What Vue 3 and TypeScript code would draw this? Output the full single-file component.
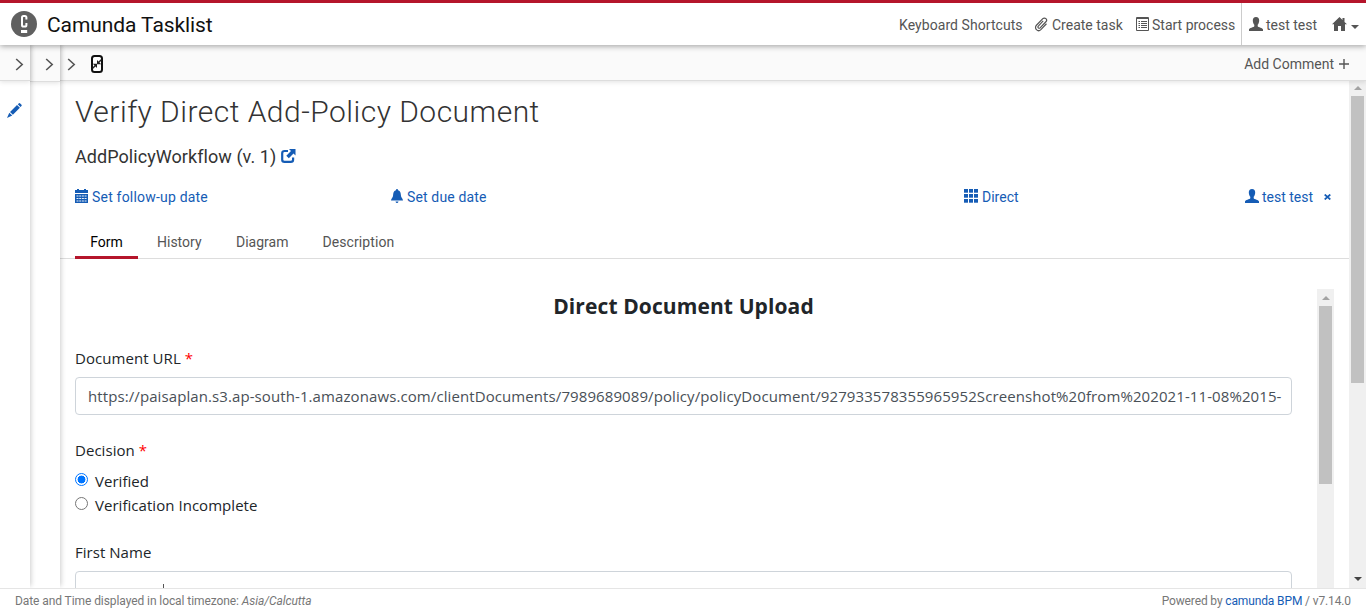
<script setup lang="ts">
import { ref } from 'vue'

const tabs = ['Form', 'History', 'Diagram', 'Description']
const activeTab = ref('Form')
const decision = ref('Verified')
const options = ['Verified', 'Verification Incomplete']
const documentUrl =
  'https://paisaplan.s3.ap-south-1.amazonaws.com/clientDocuments/7989689089/policy/policyDocument/927933578355965952Screenshot%20from%202021-11-08%2015-'
const gridCells = [0, 5, 10]
</script>

<template>
  <div class="app">
    <header class="header">
      <svg class="logo" viewBox="0 0 26 26">
        <circle cx="13" cy="13" r="13" fill="#606060" />
        <path d="M15.400 8.500V6.600Q15.400 5 13.900 5h-1.400Q11 5 11 6.600v7.300q0 1.600 1.500 1.600h1.400q1.500 0 1.500-1.600v-2" fill="none" stroke="#fff" stroke-width="2" />
        <rect x="10" y="19" width="6.200" height="3" fill="#fff" />
      </svg>
      <span class="brand">Camunda Tasklist</span>
      <nav class="nav">
        <span class="shortcuts">Keyboard Shortcuts</span>
        <span class="create">
          <svg class="icon clip" viewBox="0 0 16 16"><path d="M9.800 4.200 4.600 9.700a1.300 1.300 0 0 0 1.900 1.900l6.200-6.500a2.300 2.300 0 0 0-3.300-3.300L2.600 8.800a3.300 3.300 0 0 0 4.700 4.700l6-6.300" fill="none" stroke="#555" stroke-width="1.300" /></svg>
          <span>Create task</span>
        </span>
        <span class="start">
          <svg class="icon list" viewBox="0 0 14 14"><path d="M.5 .5h12v13H.5zM1 1.500h11" fill="none" stroke="#555" /><path d="M2.500 4.500h1.500M5 4.500h6M2.500 6.500h1.500M5 6.500h6M2.500 8.500h1.500M5 8.500h6M2.500 10.500h1.500M5 10.500h6" fill="none" stroke="#555" /></svg>
          <span>Start process</span>
        </span>
        <span class="account">
          <svg class="icon" viewBox="0 0 14 14"><path d="M7 0C4.800 0 3.700 1.600 3.800 3.700 3.900 5.600 4.700 7 5.300 7.800v1.400C4.900 10.300 0 10.700 0 12.500V14h14v-1.500c0-1.800-4.900-2.200-5.300-3.300V7.800C9.300 7 10.100 5.600 10.200 3.700 10.300 1.600 9.200 0 7 0z" fill="#555" /></svg>
          <span>test test</span>
        </span>
        <span class="home">
          <svg class="icon" viewBox="0 0 15 14"><path d="M7.500 0 0 7.300h2V14h4V9h3v5h4V7.300h2L12.500 4.900V1h-2v2z" fill="#555" /></svg>
          <i class="caret"></i>
        </span>
      </nav>
    </header>

    <div class="workspace">
      <aside class="rail first">
        <div class="bar railbar"><svg class="chevron" viewBox="0 0 9 13"><path d="m1.200 1 6 5.500-6 5.500" /></svg></div>
        <svg class="pencil" viewBox="0 0 15 15"><path d="M10.800 1.200 12 .2q.7-.4 1.200.2l1.300 1.300q.5.600 0 1.200l-1.100 1zM10 2l2.900 2.800-7 6.900L3 8.900zM2.300 9.700l2.900 2.900L0 15z" fill="#155cb5" /></svg>
      </aside>
      <aside class="rail second">
        <div class="bar railbar"><svg class="chevron" viewBox="0 0 9 13"><path d="m1.200 1 6 5.500-6 5.500" /></svg></div>
      </aside>

      <main class="task">
        <div class="bar taskbar">
          <svg class="chevron" viewBox="0 0 9 13"><path d="m1.200 1 6 5.500-6 5.500" /></svg>
          <svg class="resize" viewBox="0 0 12 18"><rect x="1" y="1" width="10" height="16" rx="2.500" fill="#fff" stroke="#111" stroke-width="2" /><path d="M6 5v4.200h4.200zM6 13V8.800H1.800z" fill="#222" /><path d="M7 8l3.300-3.300M5 10l-3.300 3.300" stroke="#222" stroke-width="1.400" /></svg>
          <span class="comment">Add Comment</span>
          <svg class="plus" viewBox="0 0 10 10"><path d="M5 0v10M0 5h10" stroke="#555" stroke-width="1.400" /></svg>
        </div>
        <div class="scrollarea">
          <div class="content">
            <h1>Verify Direct Add-Policy Document</h1>
            <div class="process">
              <span>AddPolicyWorkflow (v. 1)</span>
              <svg viewBox="0 0 15 14"><path d="M7 2H3.500Q1.200 2 1.200 4.200v6.500q0 2.200 2.300 2.200h6.300q2.300 0 2.300-2.200V8.500" fill="none" stroke="#155cb5" stroke-width="2.200" /><path d="M8 0h6.500v6.500l-2-2-4.700 4.700-2.500-2.500L10 2z" fill="#155cb5" /></svg>
            </div>
            <div class="meta">
              <span class="follow">
                <svg class="icon cal" viewBox="0 0 13 14"><path d="M0 1h2V0h2v1h5V0h2v1h2v3H0zM0 5h13v9H0z" fill="#155cb5" /><path d="M1.500 7h2M4.200 7h2M6.900 7h2M9.600 7h2M1.500 9.500h2M4.200 9.500h2M6.900 9.500h2M9.600 9.500h2M1.500 12h2M4.200 12h2M6.900 12h2M9.600 12h2" stroke="#fff" stroke-width=".9" /></svg>
                <span>Set follow-up date</span>
              </span>
              <span class="due">
                <svg class="icon bell" viewBox="0 0 12 14"><path d="M6 0q1 0 1.100 1.200C9.500 1.800 9.800 4 9.900 6.200 10 8.800 12 9.500 12 11.500H0C0 9.500 2 8.800 2.100 6.200 2.200 4 2.500 1.800 4.900 1.200Q5 0 6 0zM4.500 12.500h3Q7.200 14 6 14t-1.500-1.500z" fill="#155cb5" /></svg>
                <span>Set due date</span>
              </span>
              <span class="group">
                <svg class="icon" viewBox="0 0 14 14"><template v-for="y in gridCells" :key="y"><rect v-for="x in gridCells" :key="x" :x="x" :y="y" width="4" height="3.700" fill="#155cb5" /></template></svg>
                <span>Direct</span>
              </span>
              <span class="assignee">
                <svg class="icon" viewBox="0 0 14 14"><path d="M7 0C4.800 0 3.700 1.600 3.800 3.700 3.900 5.600 4.700 7 5.300 7.800v1.400C4.900 10.300 0 10.700 0 12.500V14h14v-1.500c0-1.800-4.900-2.200-5.300-3.300V7.800C9.300 7 10.100 5.600 10.200 3.700 10.300 1.600 9.200 0 7 0z" fill="#155cb5" /></svg>
                <span>test test</span>
                <svg class="remove" viewBox="0 0 7 6"><path d="m.7.500 5.600 5M6.300.5.700 5.500" stroke="#155cb5" stroke-width="1.700" /></svg>
              </span>
            </div>
            <div class="tabs">
              <button v-for="tab in tabs" :key="tab" :class="['tab', tab.toLowerCase(), { active: activeTab === tab }]" @click="activeTab = tab"><span>{{ tab }}</span></button>
            </div>
            <div class="formarea">
              <form class="form">
                <h2><span>Direct Document Upload</span></h2>
                <div class="label url-label"><span>Document URL</span> <b>*</b></div>
                <div class="field"><span class="url">{{ documentUrl }}</span></div>
                <div class="label decision-label"><span>Decision</span> <b>*</b></div>
                <label v-for="(option, i) in options" :key="option" :class="['option', 'option' + i]">
                  <i :class="['radio', { checked: decision === option }]" @click="decision = option"></i>
                  <span>{{ option }}</span>
                </label>
                <div class="label name-label"><span>First Name</span></div>
                <div class="field name"><i class="ascender"></i></div>
              </form>
              <div class="scrollbar inner"><i class="up"></i><div class="thumb"></div></div>
            </div>
          </div>
          <div class="scrollbar outer"><i class="up"></i><div class="thumb"></div><i class="down"></i></div>
        </div>
      </main>
    </div>

    <footer class="footer">
      <span class="zone">Date and Time displayed in local timezone: <em>Asia/Calcutta</em></span>
      <span class="powered">Powered by <a>camunda BPM</a> / v7.14.0</span>
    </footer>
  </div>
</template>

<style>
body { margin: 0; overflow: hidden; }
</style>

<style scoped>
* { box-sizing: border-box; }
.app { width: 1366px; height: 612px; display: flex; flex-direction: column; overflow: hidden; background: #fff; color: #555; font: 14px/20px Roboto, sans-serif; white-space: nowrap; }
svg { display: block; flex: none; }
.header { height: 45px; flex: none; display: flex; align-items: center; padding-left: 11px; border-top: 3px solid #b5152b; background: #fff; box-shadow: 0 1px 6px rgba(0,0,0,.38); position: relative; z-index: 5; }
.logo { width: 26px; height: 26px; }
.brand { margin: 1px 0 0 10px; color: #111; font-size: 21px; line-height: 28px; letter-spacing: -.08px; }
.nav { margin-left: auto; height: 42px; display: flex; align-items: stretch; }
.nav > span { display: flex; align-items: center; gap: 3px; padding-top: 2px; }
.nav .shortcuts { width: 135px; letter-spacing: .06px; }
.create { width: 102px; }
.start { width: 105px; }
.nav .start { gap: 2px; }
.account { width: 91px; padding-left: 7px; border-left: 1px solid #ccc; }
.home { width: 34px; }
.nav .home { gap: 4px; }
.icon { width: 14px; height: 14px; margin-top: -2px; }
.clip { width: 15px; height: 15px; }
.home .icon { width: 15px; }
.caret { border: 4px solid transparent; border-top-color: #555; border-bottom: 0; margin-top: 3px; }
.workspace { height: 543px; flex: none; display: flex; }
.rail { width: 30px; flex: none; background: #fff; position: relative; box-shadow: 1px -2px 5px rgba(0,0,0,.2); }
.first { z-index: 3; }
.second { z-index: 2; }
.bar { height: 36px; display: flex; align-items: center; background: #fafafa; border-bottom: 1px solid #ddd; box-shadow: 0 1px 5px rgba(0,0,0,.12); padding-top: 3px; }
.railbar { padding-left: 15px; }
.second .bar { height: 37px; padding-top: 2px; }
.chevron { width: 9px; height: 13px; fill: none; stroke: #555; stroke-width: 1.600; }
.pencil { width: 15px; height: 15px; margin: 22px 0 0 7px; }
.task { width: 1306px; flex: none; display: flex; flex-direction: column; }
.taskbar { padding-left: 7px; padding-right: 17px; flex: none; position: relative; z-index: 1; }
.resize { width: 12px; height: 18px; margin-left: 15px; }
.comment { margin-left: auto; margin-right: 5px; }
.plus { width: 10px; height: 10px; }
.scrollarea { display: flex; height: 507px; }
.content { width: 1289px; flex: none; }
h1 { margin: 9px 0 0 15px; font: 300 30px/44px Roboto, sans-serif; letter-spacing: .48px; color: #333; }
.process { display: flex; align-items: center; height: 30px; margin: 8px 0 0 15px; font-size: 18px; color: #333; gap: 5px; }
.process span { letter-spacing: .06px; }
.process svg { width: 15px; height: 14px; margin-top: -2px; }
.meta { display: grid; grid-template-columns: 315px 574px 281px auto; height: 20px; margin: 15px 0 0 15px; color: #155cb5; }
.meta > span { display: flex; align-items: center; gap: 4px; }
.follow span { letter-spacing: .2px; }
.due span { letter-spacing: .14px; }
.meta .due { padding-left: 1px; }
.cal { width: 13px; }
.bell { width: 12px; }
.meta .assignee { gap: 3px; }
.remove { width: 7px; height: 6px; margin-left: 8px; }
.tabs { display: flex; margin-top: 17px; height: 35px; padding-left: 15px; border-bottom: 1px solid #ddd; }
.tab { height: 35px; border: 0; border-bottom: 3px solid transparent; padding: 4px 0 0; background: none; color: #555; font: inherit; text-align: center; }
.tab.form { width: 63px; }
.tab.history { width: 83px; padding-left: 19px; text-align: left; }
.tab.diagram { width: 83px; padding-left: 15px; text-align: left; }
.tab.description { width: 100px; padding-left: 18.500px; text-align: left; letter-spacing: .08px; }
.tab.active { color: #000; border-bottom-color: #b5152b; }
.formarea { display: flex; margin-top: 30px; height: 299px; overflow: hidden; }
form.form { width: 1257px; flex: none; padding: 0 25px 0 15px; color: #212529; font: 15px/24px "Open Sans", sans-serif; letter-spacing: .04px; }
h2 { margin: 1px 0 0; font: 700 21px/32px "Open Sans", sans-serif; letter-spacing: .1px; text-align: center; }
.label { height: 24px; }
.label b { color: #f00; font-weight: 400; }
.url-label { margin-top: 24px; letter-spacing: .06px; }
.field { height: 38px; margin-top: 7px; padding: 6px 10px 6px 12px; border: 1px solid #ced4da; border-radius: 4px; overflow: hidden; color: #495057; letter-spacing: .093px; }
.decision-label { margin-top: 23px; }
.option { display: flex; align-items: center; height: 24px; }
.option0 { margin-top: 7px; }
.radio { width: 13px; height: 13px; border: 1px solid #767676; border-radius: 50%; margin: 0 7px 3px 0; }
.radio.checked { border-color: #0075ff; background: radial-gradient(circle, #0075ff 0 3.700px, #fff 4.200px); }
.name-label { margin-top: 23px; }
.ascender { display: block; width: 1px; height: 5px; background: #555; margin: 6px 0 0 75px; }
.scrollbar { width: 17px; flex: none; background: #f0f0f0; display: flex; flex-direction: column; align-items: center; }
.thumb { width: 13px; background: #c1c1c1; }
.up, .down { border: 4px solid transparent; height: 0; flex: none; }
.up { border-top: 0; border-bottom-color: #a3a3a3; margin: 7px 0 6px; }
.down { border-bottom: 0; border-top-color: #444; margin: auto 0 7px; }
.inner { height: 299px; }
.inner .thumb { height: 178px; }
.outer { height: 509px; margin-top: -2px; }
.outer .thumb { height: 287px; }
.footer { height: 24px; flex: none; display: flex; justify-content: space-between; padding: 2px 15px 0; border-top: 1px solid #e5e5e5; font-size: 12px; color: #777; background: #fff; position: relative; z-index: 4; }
.zone { letter-spacing: -.08px; }
.powered { letter-spacing: -.13px; }
.footer a { color: #155cb5; }
</style>
